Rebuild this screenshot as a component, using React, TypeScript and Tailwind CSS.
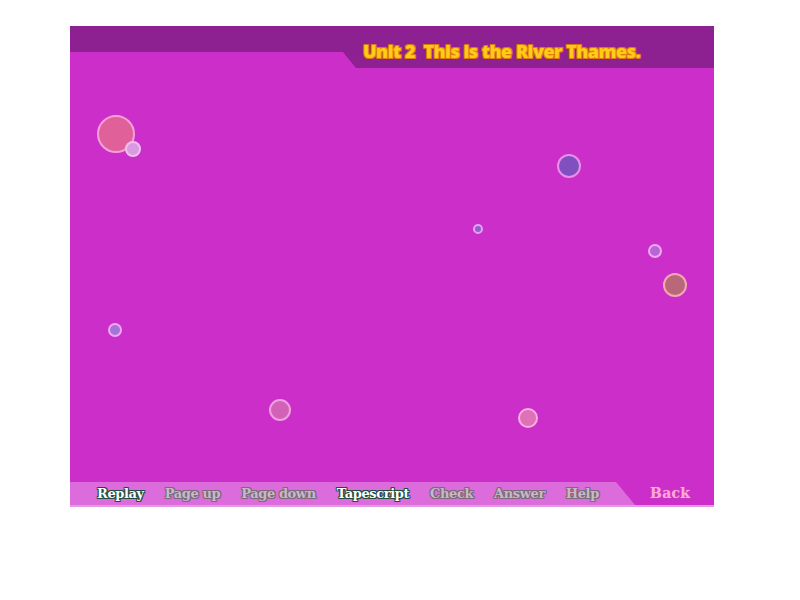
import React from "react";

const bubbles = [
  { x: 46, y: 66, r: 19, fill: "#e0609a", ring: "#f6a0d8" },
  { x: 63, y: 81, r: 8, fill: "#d89ae0", ring: "#f0c0f0" },
  { x: 499, y: 98, r: 12, fill: "#8050c0", ring: "#e890e8" },
  { x: 408, y: 161, r: 5, fill: "#9060d0", ring: "#e8a0f0" },
  { x: 585, y: 183, r: 7, fill: "#b866d6", ring: "#f0a8f0" },
  { x: 605, y: 217, r: 12, fill: "#b86878", ring: "#f4a8b0" },
  { x: 45, y: 262, r: 7, fill: "#a474d8", ring: "#f0a8f0" },
  { x: 210, y: 342, r: 11, fill: "#d262b8", ring: "#f0a0e0" },
  { x: 458, y: 350, r: 10, fill: "#e070b8", ring: "#f8b0e0" },
];

const buttons = [
  { label: "Replay", on: true },
  { label: "Page up", on: false },
  { label: "Page down", on: false },
  { label: "Tapescript", on: true },
  { label: "Check", on: false },
  { label: "Answer", on: false },
  { label: "Help", on: false },
];

const onStyle = "text-white [text-shadow:-1px_-1px_0_#1f4d3a,1px_-1px_0_#1f4d3a,-1px_1px_0_#1f4d3a,1px_1px_0_#1f4d3a,0_1px_0_#1f4d3a,0_-1px_0_#1f4d3a,1px_0_0_#1f4d3a,-1px_0_0_#1f4d3a]";
const offStyle = "text-[#c8b8c8] [text-shadow:-1px_-1px_0_#7a6a7a,1px_-1px_0_#7a6a7a,-1px_1px_0_#7a6a7a,1px_1px_0_#7a6a7a,0_1px_0_#7a6a7a,0_-1px_0_#7a6a7a,1px_0_0_#7a6a7a,-1px_0_0_#7a6a7a]";

export default function App() {
  return (
    <div className="w-[800px] h-[600px] bg-white pt-[26px] pl-[70px]">
      <div className="w-[644px] h-[481px] bg-[#cb2ec9] flex flex-col">
        {/* header */}
        <div className="flex items-start h-[42px]">
          <div className="flex-1 h-[26px] bg-[#8d2191]" />
          <div className="w-[371px] h-[42px] bg-[#8d2191] [clip-path:polygon(0_0,100%_0,100%_100%,13px_100%,0_26px)] flex items-center pl-[20px] pt-[9px]">
            <span className="font-['Open_Sans',sans-serif] font-extrabold text-[18px] tracking-[-0.5px] text-[#ffcc1a] whitespace-pre [text-shadow:-1px_-1px_0_#e07a10,1px_-1px_0_#e07a10,-1px_1px_0_#e07a10,1px_1px_0_#e07a10]">
              Unit 2  This is the River Thames.
            </span>
          </div>
        </div>

        {/* canvas */}
        <div className="relative flex-1">
          {bubbles.map((b, i) => (
            <div
              key={i}
              className="absolute rounded-full border-2"
              style={{
                left: b.x - b.r,
                top: b.y - b.r,
                width: b.r * 2,
                height: b.r * 2,
                background: b.fill,
                borderColor: b.ring,
              }}
            />
          ))}
        </div>

        {/* bottom bar */}
        <div className="flex h-[25px] border-b-2 border-[#e39ae3]">
          <div className="w-[565px] bg-[#dc6cdc] [clip-path:polygon(0_0,546px_0,100%_100%,0_100%)] flex items-center pl-[27px] gap-[21px] font-['DejaVu_Serif',serif] font-bold text-[13px] tracking-[-0.4px]">
            {buttons.map((b) => (
              <span key={b.label} className={b.on ? onStyle : offStyle}>
                {b.label}
              </span>
            ))}
          </div>
          <div className="flex-1 flex items-center pl-[15px]">
            <span className="font-['DejaVu_Serif',serif] font-bold text-[14px] tracking-[0.3px] text-[#ffa8d8] [text-shadow:0_0_1px_#e070b0]">
              Back
            </span>
          </div>
        </div>
      </div>
    </div>
  );
}
